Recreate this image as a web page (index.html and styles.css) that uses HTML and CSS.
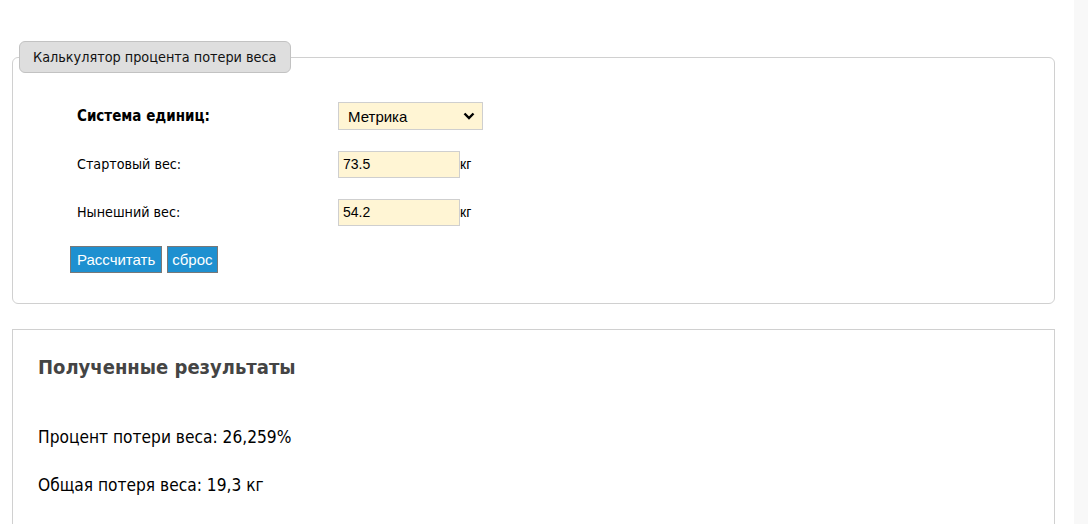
FILE: index.html
```html
<!DOCTYPE html>
<html lang="ru">
<head>
<meta charset="utf-8">
<title>Калькулятор процента потери веса</title>
<link rel="stylesheet" href="styles.css">
</head>
<body>
<div class="page">
  <main class="content">
    <form class="calc">
      <fieldset class="calc-box">
        <legend class="calc-legend">Калькулятор процента потери веса</legend>
        <div class="row">
          <label class="row-label bold">Система единиц:</label>
          <div class="select-wrap">
            <select class="field select">
              <option>Метрика</option>
              <option>Имперская</option>
            </select>
            <svg class="chevron" viewBox="0 0 12 8" width="12" height="8"><path d="M1.5 1.5 L6 6 L10.5 1.5" fill="none" stroke="#000" stroke-width="2.4"/></svg>
          </div>
        </div>
        <div class="row">
          <label class="row-label">Стартовый вес:</label>
          <input class="field input" type="text" value="73.5"><span class="unit">кг</span>
        </div>
        <div class="row">
          <label class="row-label">Нынешний вес:</label>
          <input class="field input" type="text" value="54.2"><span class="unit">кг</span>
        </div>
        <div class="buttons">
          <button type="button" class="btn btn-wide">Рассчитать</button>
          <button type="reset" class="btn">сброс</button>
        </div>
      </fieldset>
    </form>
    <section class="results">
      <h2 class="results-title">Полученные результаты</h2>
      <p class="result-line">Процент потери веса: 26,259%</p>
      <p class="result-line">Общая потеря веса: 19,3 кг</p>
    </section>
  </main>
  <div class="scroll-strip"></div>
</div>
</body>
</html>
```
FILE: styles.css
```css
* { box-sizing: border-box; }
html, body { margin: 0; padding: 0; height: 100%; }
body {
  font-family: "DejaVu Sans Condensed", "DejaVu Sans", sans-serif;
  color: #000;
  background: #fff;
  overflow: hidden;
}
.page {
  display: flex;
  height: 524px;
}
.content {
  flex: 1;
  padding: 41px 19px 0 12px;
}
.scroll-strip {
  width: 14px;
  background: #f8f8f8;
}
.calc { margin: 0; }
.calc-box {
  margin: 0;
  border: 1px solid #d0d0d0;
  border-radius: 6px;
  padding: 19px 0 30px 57px;
  min-width: 0;
}
.calc-legend {
  margin-left: -51px;
  padding: 7px 13px 7px 13px;
  background: #dedede;
  border: 1px solid #c2c2c2;
  border-radius: 6px;
  font-size: 14.3px;
  line-height: 16px;
  color: #111;
}
.row {
  display: flex;
  align-items: center;
  height: 48px;
  margin-left: 7px;
}
.row-label {
  width: 261px;
  font-size: 14.2px;
}
.bold { font-weight: bold; font-size: 15px; }
.field {
  font-family: "Liberation Sans", Arial, sans-serif;
  font-size: 14px;
  background: #fff5d4;
  border: 1px solid #cfcfcf;
  color: #000;
  margin: 0;
  outline: none;
}
.select-wrap {
  position: relative;
  width: 145px;
  height: 28px;
}
.select {
  appearance: none;
  -webkit-appearance: none;
  width: 100%;
  height: 100%;
  padding: 0 0 0 9px;
  border-radius: 0;
  font-size: 15px;
}
.chevron {
  position: absolute;
  right: 8px;
  top: 10px;
  pointer-events: none;
}
.input {
  width: 122px;
  height: 27px;
  padding: 0 4px;
}
.unit {
  font-family: "Liberation Sans", Arial, sans-serif;
  font-size: 14px;
}
.buttons {
  display: flex;
  gap: 5px;
  margin-top: 10px;
}
.btn {
  font-family: "Liberation Sans", Arial, sans-serif;
  font-size: 15px;
  color: #fff;
  background: #1e90d0;
  border: 1px solid #787878;
  height: 27px;
  padding: 0 4px;
  margin: 0;
  border-radius: 0;
}
.btn-wide { padding: 0 6px; }
.results {
  margin-top: 25px;
  border: 1px solid #d0d0d0;
  border-bottom: none;
  padding: 24px 25px 0 25px;
  height: 200px;
}
.results-title {
  margin: 0;
  font-size: 20px;
  line-height: 26px;
  color: #444;
}
.result-line {
  margin: 0;
  font-size: 17.2px;
  line-height: 22px;
}
.results-title + .result-line { margin-top: 46px; }
.result-line + .result-line { margin-top: 26px; }
```
